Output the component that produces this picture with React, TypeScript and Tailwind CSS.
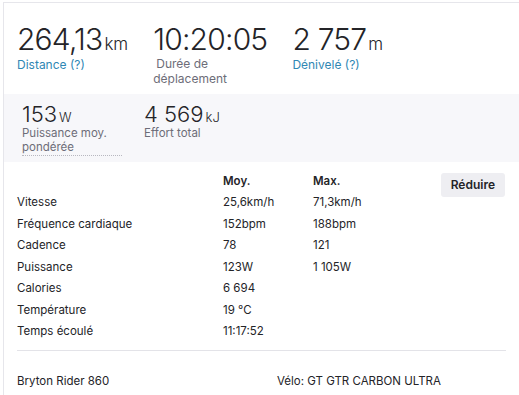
import React from 'react'

const rows = [
  { label: 'Vitesse', avg: '25,6km/h', max: '71,3km/h' },
  { label: 'Fréquence cardiaque', avg: '152bpm', max: '188bpm' },
  { label: 'Cadence', avg: '78', max: '121' },
  { label: 'Puissance', avg: '123W', max: '1 105W' },
  { label: 'Calories', avg: '6 694', max: '' },
  { label: 'Température', avg: '19 °C', max: '' },
  { label: 'Temps écoulé', avg: '11:17:52', max: '' },
]

function BigStat({ value, unit, children }: { value: string; unit: string; children: React.ReactNode }) {
  return (
    <div className="flex flex-col">
      <div className="flex items-baseline leading-none text-[#242428]">
        <span className="text-[30px] font-light tracking-[-0.8px]">{value}</span>
        <span className="ml-[2px] text-[17px] font-light">{unit}</span>
      </div>
      {children}
    </div>
  )
}

export default function App() {
  return (
    <div
      className="w-[519px] h-[395px] overflow-hidden bg-white"
      style={{ fontFamily: 'Inter, "Noto Sans", sans-serif' }}
    >
      <div className="ml-[3px] mt-[2px] h-[393px] border-l border-t border-[#e6e6eb]">
        <div className="flex gap-[25px] px-[13px] pt-[21px] h-[91px]">
          <BigStat value="264,13" unit="km">
            <span className="mt-[2px] text-[12px] text-[#2f87b4]">Distance (?)</span>
          </BigStat>
          <BigStat value="10:20:05" unit="">
            <span className="mt-[2px] pl-[3px] text-[12px] leading-[15px] text-[#6d6d78]">
              Durée de
              <br />
              <span className="-ml-[3px]">déplacement</span>
            </span>
          </BigStat>
          <div className="-ml-[2px]">
            <BigStat value="2 757" unit="m">
              <span className="mt-[2px] text-[12px] text-[#2f87b4]">Dénivelé (?)</span>
            </BigStat>
          </div>
        </div>
        <div className="flex gap-[22px] bg-[#f7f7fa] px-[18px] pt-[9px] h-[68px]">
          <div className="flex flex-col w-[100px]">
            <div className="flex items-baseline leading-none text-[#242428]">
              <span className="text-[22px] font-light">153</span>
              <span className="ml-[2px] text-[13px] font-light">W</span>
            </div>
            <span className="mt-[1px] text-[11.5px] leading-[14px] text-[#6d6d78] border-b border-dotted border-[#b8b8c0] pb-[1px]">
              Puissance moy.
              <br />
              pondérée
            </span>
          </div>
          <div className="flex flex-col">
            <div className="flex items-baseline leading-none text-[#242428]">
              <span className="text-[22px] font-light">4 569</span>
              <span className="ml-[2px] text-[13px] font-light">kJ</span>
            </div>
            <span className="mt-[1px] text-[11.5px] leading-[14px] text-[#6d6d78]">Effort total</span>
          </div>
        </div>
        <div className="relative px-[13px] pt-[10px] text-[11.5px] text-[#242428]">
          <button className="absolute right-[14px] top-[11px] h-[24px] px-[10px] rounded-[3px] bg-[#eeeef2] text-[12px] font-semibold text-[#242428]">
            Réduire
          </button>
          <div className="grid grid-cols-[206px_90px_1fr] h-[20px] items-center">
            <span />
            <span className="font-semibold">Moy.</span>
            <span className="font-semibold">Max.</span>
          </div>
          {rows.map((r) => (
            <div key={r.label} className="grid grid-cols-[206px_90px_1fr] h-[21.5px] items-center">
              <span>{r.label}</span>
              <span>{r.avg}</span>
              <span>{r.max}</span>
            </div>
          ))}
          <div className="mt-[7px] border-t border-[#e3e3e8]" />
          <div className="grid grid-cols-[260px_1fr] pt-[22px] text-[11.5px]">
            <span>Bryton Rider 860</span>
            <span>Vélo: GT GTR CARBON ULTRA</span>
          </div>
        </div>
      </div>
    </div>
  )
}
